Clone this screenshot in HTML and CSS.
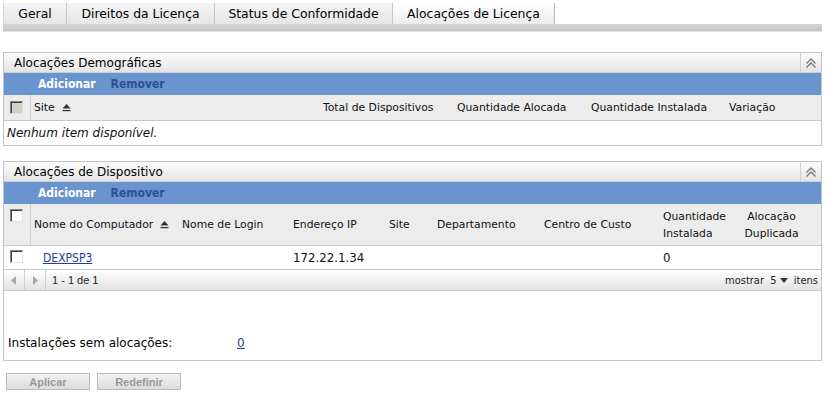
FILE: index.html
```html
<!DOCTYPE html>
<html>
<head>
<meta charset="utf-8">
<link rel="stylesheet" href="styles.css">
</head>
<body>
<div class="page">
  <div class="tabs">
    <div class="tab t1">Geral</div>
    <div class="tab t2">Direitos da Licença</div>
    <div class="tab t3">Status de Conformidade</div>
    <div class="tab t4 active">Alocações de Licença</div>
  </div>
  <div class="tabbar"></div>

  <div class="panel p1">
    <div class="phead"><span class="ptitle">Alocações Demográficas</span><span class="collapse"><svg width="12" height="10" viewBox="0 0 12 10"><path d="M1.5 5.5 L6 1 L10.5 5.5 M1.5 9.5 L6 5 L10.5 9.5" fill="none" stroke="#777" stroke-width="1.3"/></svg></span></div>
    <div class="toolbar"><span class="add">Adicionar</span><span class="rem">Remover</span></div>
    <div class="grid g1 hdr">
      <div class="cell chk"><span class="cb dis"></span></div>
      <div class="cell first">Site <span class="sort"><svg width="9" height="8" viewBox="0 0 9 8"><path d="M4.5 0 L8.5 4.5 L0.5 4.5 Z" fill="#333"/><rect x="0.5" y="6" width="8" height="1.2" fill="#333"/></svg></span></div>
      <div class="cell">Total de Dispositivos</div>
      <div class="cell">Quantidade Alocada</div>
      <div class="cell">Quantidade Instalada</div>
      <div class="cell">Variação</div>
    </div>
    <div class="empty">Nenhum item disponível.</div>
  </div>

  <div class="panel p2">
    <div class="phead"><span class="ptitle">Alocações de Dispositivo</span><span class="collapse"><svg width="12" height="10" viewBox="0 0 12 10"><path d="M1.5 5.5 L6 1 L10.5 5.5 M1.5 9.5 L6 5 L10.5 9.5" fill="none" stroke="#777" stroke-width="1.3"/></svg></span></div>
    <div class="toolbar"><span class="add">Adicionar</span><span class="rem">Remover</span></div>
    <div class="grid g2 hdr tall">
      <div class="cell chk top"><span class="cb"></span></div>
      <div class="cell first sortcell"><span>Nome do Computador</span><span class="sort"><svg width="9" height="8" viewBox="0 0 9 8"><path d="M4.5 0 L8.5 4.5 L0.5 4.5 Z" fill="#333"/><rect x="0.5" y="6" width="8" height="1.2" fill="#333"/></svg></span></div>
      <div class="cell">Nome de Login</div>
      <div class="cell">Endereço IP</div>
      <div class="cell">Site</div>
      <div class="cell">Departamento</div>
      <div class="cell">Centro de Custo</div>
      <div class="cell"><span class="two">Quantidade<br>Instalada</span></div>
      <div class="cell center"><span class="two">Alocação<br>Duplicada</span></div>
    </div>
    <div class="grid g2 row">
      <div class="cell chk top"><span class="cb"></span></div>
      <div class="cell first"><a class="link dex">DEXPSP3</a></div>
      <div class="cell"></div>
      <div class="cell">172.22.1.34</div>
      <div class="cell"></div>
      <div class="cell"></div>
      <div class="cell"></div>
      <div class="cell">0</div>
      <div class="cell"></div>
    </div>
    <div class="pager">
      <span class="pbtn"><svg width="6" height="9" viewBox="0 0 6 9"><path d="M5 0 L0 4.5 L5 9 Z" fill="#a8a8a8"/></svg></span>
      <span class="pbtn"><svg width="6" height="9" viewBox="0 0 6 9"><path d="M1 0 L6 4.5 L1 9 Z" fill="#a8a8a8"/></svg></span>
      <span class="pinfo">1 - 1 de 1</span>
      <span class="pright">mostrar&nbsp; 5 <svg width="8" height="5" viewBox="0 0 8 5"><path d="M0 0 L8 0 L4 5 Z" fill="#333"/></svg>&nbsp; itens</span>
    </div>
    <div class="summary"><span class="slabel">Instalações sem alocações:</span><a class="link">0</a></div>
  </div>

  <div class="buttons">
    <span class="btn">Aplicar</span>
    <span class="btn">Redefinir</span>
  </div>
</div>
</body>
</html>
```

FILE: styles.css
```css
html, body { margin: 0; padding: 0; background: #fff; }
body { font-family: "DejaVu Sans", sans-serif; color: #000; }
.page { padding: 3px 4px 0 3px; width: 819px; }

.tabs { display: flex; height: 21px; }
.tab {
  display: flex; align-items: center; justify-content: center;
  font-size: 12.4px; color: #000;
  background: linear-gradient(#f4f4f4, #e6e6e6);
  border-right: 1px solid #c6c6c6;
  box-sizing: border-box;
}
.t1 { width: 64px; border-left: 1px solid #d8d8d8; }
.t2 { width: 148px; }
.t3 { width: 178px; }
.t4 { width: 162px; }
.tab.active { background: linear-gradient(#ffffff, #ececec); border-right: 1px solid #b8b8b8; }
.tabbar { height: 7px; background: linear-gradient(#d6d6d6, #c4c4c4); border-bottom: 1px solid #e2e2e2; }

.panel { border: 1px solid #c4c4c4; }
.p1 { margin-top: 20px; }
.p2 { margin-top: 15px; }
.phead {
  height: 19px; display: flex; align-items: center; justify-content: space-between;
  background: linear-gradient(#fcfcfc, #e4e4e4);
  border-bottom: 1px solid #cfcfcf;
}
.ptitle { font-size: 12px; padding-left: 10px; }
.collapse {
  width: 20px; height: 19px; border-left: 1px solid #cfcfcf;
  display: flex; align-items: center; justify-content: center;
}
.toolbar {
  height: 22px; background: #6994cd; display: flex; align-items: center;
  font-family: "DejaVu Sans Condensed", sans-serif;
  font-size: 12px; font-weight: bold; padding-left: 34px; gap: 15px;
}
.add { color: #fff; }
.rem { color: #2f5091; font-weight: bold; }

.grid { display: grid; }
.g1 { grid-template-columns: 26px 289px 134px 134px 138px 1fr; }
.g2 { grid-template-columns: 26px 148px 111px 96px 48px 107px 119px 75px 1fr; }
.hdr { background: #ececec; border-bottom: 1px solid #c8c8c8; font-size: 10.8px; }
.g1.hdr { height: 25px; }
.tall { height: 41px; }
.cell { display: flex; align-items: center; padding-left: 4px; white-space: nowrap; color: #111; }
.cell.first { border-left: 1px solid #d0d0d0; padding-left: 3px; }
.cell.chk { padding-left: 6px; }
.cell.chk.top { align-items: flex-start; padding-top: 5px; }
.two { display: block; line-height: 17px; }
.cell.center { justify-content: center; text-align: center; padding-right: 12px; padding-left: 0; }
.sort { display: inline-flex; margin-left: 7px; }
.sortcell .sort { margin-left: 7px; }
.cb { width: 11px; height: 11px; border: 1px solid #828282; background: #fff; box-sizing: content-box; display: inline-block; border-right-color: #e0e0e0; border-bottom-color: #e0e0e0; box-shadow: inset 1px 1px 0 #404040; }
.cb.dis { background: #d4d0c8; }

.empty { font-size: 12px; font-style: italic; height: 24px; display: flex; align-items: center; padding-left: 3px; color: #111; }

.row { height: 23px; font-size: 11.8px; border-bottom: 1px solid #c8c8c8; }
.row .cell.first { border-left: none; }
.row .cell.chk.top { padding-top: 4px; }
.link { color: #1f3e9a; text-decoration: underline; }
.dex { margin-left: 10px; font-family: "DejaVu Sans Condensed", sans-serif; font-size: 12px; }

.pager {
  height: 20px; display: flex; align-items: center;
  background: linear-gradient(#ffffff, #e2e2e2);
  border-bottom: 1px solid #c8c8c8;
  font-family: "Liberation Sans", Arial, sans-serif; font-size: 11px;
}
.pbtn { width: 20px; height: 20px; border-right: 1px solid #cfcfcf; display: flex; align-items: center; justify-content: center; }
.pinfo { padding-left: 6px; color: #222; }
.pright { margin-left: auto; padding-right: 3px; font-family: "DejaVu Sans Condensed", sans-serif; font-size: 11px; color: #222; display: flex; align-items: center; }
.pright svg { margin-left: 3px; }

.summary { height: 69px; display: flex; align-items: flex-end; padding: 0 0 10px 4px; font-size: 12px; box-sizing: border-box; }
.slabel { width: 229px; }

.buttons { display: flex; gap: 7px; padding: 12px 0 0 3px; }
.btn {
  width: 84px; height: 17px; box-sizing: border-box; display: flex; align-items: center; justify-content: center;
  font-family: "Liberation Sans", Arial, sans-serif; font-size: 11px; font-weight: bold; color: #999;
  background: linear-gradient(#f2f2f2, #dcdcdc); border: 1px solid #bdbdbd;
}
```
